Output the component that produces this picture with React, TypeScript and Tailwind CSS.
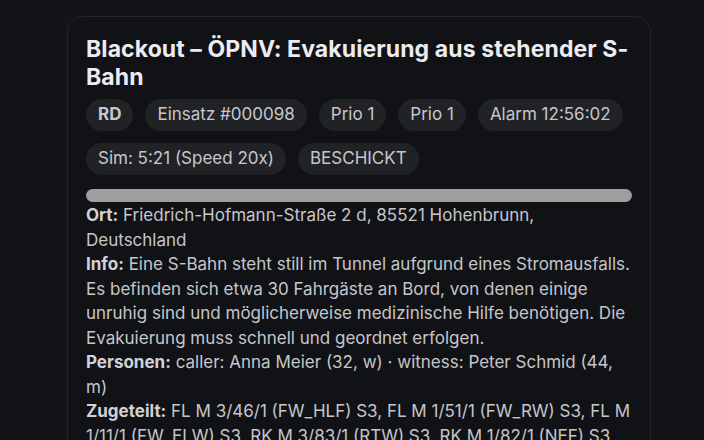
import React from "react";

const chips1 = [
  { t: "RD", b: true },
  { t: "Einsatz #000098" },
  { t: "Prio 1" },
  { t: "Prio 1" },
  { t: "Alarm 12:56:02" },
];
const chips2 = [{ t: "Sim: 5:21 (Speed 20x)" }, { t: "BESCHICKT" }];

function Chip({ t, b }: { t: string; b?: boolean }) {
  return (
    <span
      className={`inline-flex h-8 items-center whitespace-nowrap rounded-full bg-[#212226] px-3 text-[17px] text-[#c6c7cc] ${
        b ? "font-bold" : ""
      }`}
    >
      {t}
    </span>
  );
}

function L({ children }: { children: React.ReactNode }) {
  return <b className="font-bold text-[#d2d2d6]">{children}</b>;
}

export default function App() {
  return (
    <div
      className="h-[440px] w-[704px] overflow-hidden bg-[#141418] pl-[67px] pt-4"
      style={{ fontFamily: "Inter, 'Noto Sans', sans-serif" }}
    >
      <div className="w-[584px] rounded-2xl border border-[#24252a] bg-[#111215] px-[18px] pt-[18px] pb-6">
        <h1 className="text-[23px] font-bold leading-[28px] tracking-[0.1px] text-[#ececf0]">
          Blackout – ÖPNV: Evakuierung aus stehender S-
          <br />
          Bahn
        </h1>
        <div className="mt-[8px] flex flex-wrap gap-3">
          {chips1.map((c, i) => (
            <Chip key={i} {...c} />
          ))}
          {chips2.map((c, i) => (
            <Chip key={"b" + i} {...c} />
          ))}
        </div>
        <div className="mt-[14px] h-[13px] w-full rounded-full bg-[#9e9e9e]" />
        <div className="mt-[1px] whitespace-nowrap text-[17px] leading-[24.5px] text-[#c6c6cb]">
          <p>
            <L>Ort:</L> Friedrich-Hofmann-Straße 2 d, 85521 Hohenbrunn,
            <br />
            Deutschland
          </p>
          <p>
            <L>Info:</L> Eine S-Bahn steht still im Tunnel aufgrund eines Stromausfalls.
            <br />
            Es befinden sich etwa 30 Fahrgäste an Bord, von denen einige
            <br />
            unruhig sind und möglicherweise medizinische Hilfe benötigen. Die
            <br />
            Evakuierung muss schnell und geordnet erfolgen.
          </p>
          <p>
            <L>Personen:</L> caller: Anna Meier (32, w) · witness: Peter Schmid (44,
            <br />
            m)
          </p>
          <p>
            <L>Zugeteilt:</L> FL M 3/46/1 (FW_HLF) S3, FL M 1/51/1 (FW_RW) S3, FL M
            <br />
            1/11/1 (FW_ELW) S3, RK M 3/83/1 (RTW) S3, RK M 1/82/1 (NEF) S3
          </p>
        </div>
      </div>
    </div>
  );
}
